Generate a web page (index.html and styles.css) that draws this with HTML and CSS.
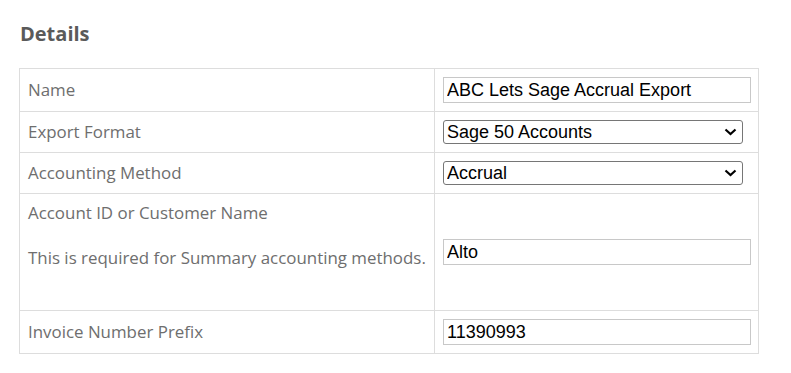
FILE: index.html
```html
<!DOCTYPE html>
<html lang="en">

<head>
    <meta charset="utf-8">
    <title>Export Details</title>
    <link rel="stylesheet" href="styles.css">
</head>

<body>
    <div class="details">
        <h2 class="details__title">Details</h2>
        <table class="details-table">
            <colgroup>
                <col class="details-table__label-col">
                <col>
            </colgroup>
            <tr>
                <td class="details-table__label">Name</td>
                <td class="details-table__field">
                    <input class="text-input" value="ABC Lets Sage Accrual Export">
                </td>
            </tr>
            <tr>
                <td class="details-table__label">Export Format</td>
                <td class="details-table__field">
                    <div class="select-wrap">
                        <select class="select-input">
                            <option>Sage 50 Accounts</option>
                        </select>
                        <svg class="select-wrap__chevron" width="13" height="8" viewBox="0 0 13 8">
                            <path d="M1.5 1.5 L6.5 6 L11.5 1.5" fill="none" stroke="#000" stroke-width="2.2"/>
                        </svg>
                    </div>
                </td>
            </tr>
            <tr>
                <td class="details-table__label">Accounting Method</td>
                <td class="details-table__field">
                    <div class="select-wrap">
                        <select class="select-input">
                            <option>Accrual</option>
                            <option>Summary</option>
                        </select>
                        <svg class="select-wrap__chevron" width="13" height="8" viewBox="0 0 13 8">
                            <path d="M1.5 1.5 L6.5 6 L11.5 1.5" fill="none" stroke="#000" stroke-width="2.2"/>
                        </svg>
                    </div>
                </td>
            </tr>
            <tr>
                <td class="details-table__label">
                    Account ID or Customer Name
                    <p class="details-table__hint">This is required for Summary accounting methods.</p>
                </td>
                <td class="details-table__field">
                    <input class="text-input" value="Alto">
                </td>
            </tr>
            <tr>
                <td class="details-table__label">Invoice Number Prefix</td>
                <td class="details-table__field">
                    <input class="text-input" value="11390993">
                </td>
            </tr>
        </table>
    </div>
</body>

</html>
```

FILE: styles.css
```css
* {
    box-sizing: border-box;
}
body {
    margin: 0;
    font: normal 16.9px 'Open Sans', sans-serif;
    color: #6e6e6e;
    background-color: #ffffff;
}

.details {
    padding: 20px 19px;
}

.details__title {
    margin: 0 0 20px 1px;
    font-size: 20px;
    font-weight: bold;
    line-height: 28px;
    color: #5a5a5a;
}

/* ============= */
/* Details table */
/* ============= */
.details-table {
    border-collapse: collapse;
    table-layout: fixed;
    width: 740px;
}
.details-table__label-col {
    width: 415px;
}
.details-table td {
    border: solid 1px #dddddd;
    padding: 8px 8px;
    vertical-align: middle;
    line-height: 22px;
}
.details-table__hint {
    margin: 23px 0 33px;
    white-space: nowrap;
}

.text-input {
    display: block;
    width: 308px;
    height: 26px;
    padding: 1px 3px 0;
    border: solid 1px #c8c8c8;
    font: normal 18px 'Liberation Sans', Arial, sans-serif;
    color: #000000;
}

.select-wrap {
    position: relative;
    width: 300px;
}
.select-wrap__chevron {
    position: absolute;
    right: 6px;
    top: 8px;
    pointer-events: none;
}
.select-input {
    display: block;
    width: 300px;
    height: 24px;
    padding: 0 3px;
    border: solid 1px #767676;
    border-radius: 3px;
    background-color: #ffffff;
    font: normal 18px 'Liberation Sans', Arial, sans-serif;
    color: #000000;
    -webkit-appearance: none;
    appearance: none;
}
```
